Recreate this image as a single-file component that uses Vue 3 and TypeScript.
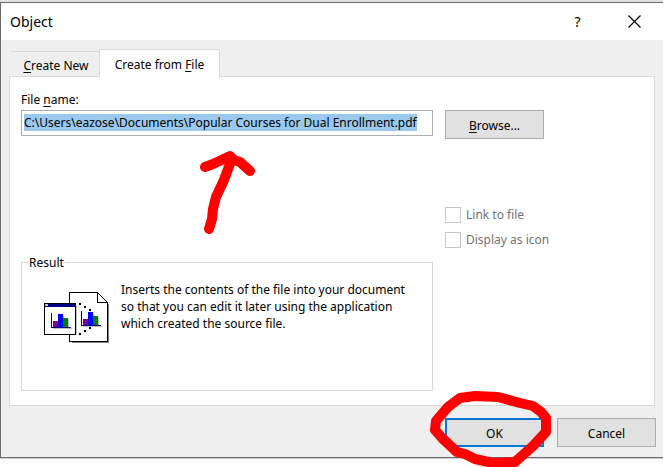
<script setup lang="ts">
import { onMounted, ref } from 'vue'

const fileName = ref('C:\\Users\\eazose\\Documents\\Popular Courses for Dual Enrollment.pdf')
const fileInput = ref<HTMLInputElement | null>(null)

onMounted(() => {
  fileInput.value?.focus()
  fileInput.value?.select()
})
</script>

<template>
  <main class="dialog">
    <header class="titlebar">
      <h1>Object</h1>
      <button class="caption help" type="button" aria-label="Help">?</button>
      <button class="caption" type="button" aria-label="Close">
        <svg width="13" height="13" viewBox="0 0 13 13"><path d="M.5 .5l12 12M12.5 .5l-12 12" stroke="#000" stroke-width="1.2" /></svg>
      </button>
    </header>

    <div class="body">
      <div class="tabs" role="tablist">
        <button class="tab" type="button" role="tab"><span><u>C</u>reate New</span></button>
        <button class="tab active" type="button" role="tab" aria-selected="true"><span>Create from <u>F</u>ile</span></button>
      </div>

      <section class="panel">
        <label class="name-label" for="file-name">File <u>n</u>ame:</label>
        <div class="field">
          <input id="file-name" ref="fileInput" v-model="fileName" type="text" spellcheck="false" />
          <svg class="arrow" width="60" height="90" viewBox="200 148 60 90" aria-hidden="true">
            <path d="M209 229L212 219L213 209L216 197L224 180L231 161M205 167L213 164L230 156L234 160L240 162L250 171" />
          </svg>
        </div>
        <button class="button browse" type="button"><span><u>B</u>rowse...</span></button>

        <div class="options">
          <label><input type="checkbox" disabled />Link to file</label>
          <label><input type="checkbox" disabled />Display as icon</label>
        </div>

        <fieldset class="result">
          <legend>Result</legend>
          <svg class="preview" width="66" height="52" viewBox="0 0 66 52" shape-rendering="crispEdges" aria-hidden="true">
            <path d="M28 51h37V12h-1v38H28z" fill="#808080" />
            <path d="M25.500 .500h28l10 10v39h-38z" fill="#fff" stroke="#000" />
            <path d="M53.500 .500v10h10" fill="none" stroke="#000" />
            <path d="M55 2l8 8" stroke="#000" shape-rendering="auto" />
            <path d="M2 43h31V14h-1v29z" fill="#c0c0c0" />
            <path d="M.500 11.500h31v31H.500z" fill="#fff" stroke="#000" />
            <path d="M1 12h30v3H1z" fill="#000080" />
            <path d="M1 12h3v2H1z" fill="#c0c0c0" />
            <g id="bars">
              <path d="M9 37h19v-1H9zM19 24h1v12h-1zM24 27h1v9h-1z" fill="#c0c0c0" />
              <path d="M9 29h5v6H9z" fill="#800080" />
              <path d="M14 22h5v13h-5z" fill="#00f" />
              <path d="M19 26h5v9h-5z" fill="#008000" />
              <path d="M7 21h1v14h19v1H7z" fill="#000080" />
            </g>
            <use href="#bars" x="30" y="-2" />
            <path d="M35 11h2v2h-2zM40 14h2v2h-2zM45 17h2v2h-2zM45 35h2v2h-2zM40 38h2v2h-2zM35 41h2v2h-2z" fill="#000" />
          </svg>
          <p>Inserts the contents of the file into your document so that you can edit it later using the application which created the source file.</p>
        </fieldset>
      </section>

      <footer class="actions">
        <div class="ok">
          <button class="button primary" type="button">OK</button>
          <svg class="ring" width="124" height="84" viewBox="428 386 124 84" aria-hidden="true">
            <path d="M498 397L475 396L460 398L448 407L436 421L435 430L442 438L457 452L465 454L475 459L493 463L515 462L533 446L546 432L546 418L541 412L533 406L520 403L498 397" />
          </svg>
        </div>
        <button class="button" type="button">Cancel</button>
      </footer>
    </div>
  </main>
</template>

<style>
body {
  min-height: 100vh;
  margin: 0;
  background: #fff;
  overflow: hidden;
}
</style>

<style scoped>
* {
  box-sizing: border-box;
}
.dialog {
  font: 12px/17px "Noto Sans", sans-serif;
  color: #000;
  border-top: 2px solid #e1e1e1;
}
button,
input {
  font: inherit;
  color: inherit;
}
u {
  text-underline-offset: 2px;
  text-decoration-thickness: 1px;
}
.titlebar {
  display: flex;
  align-items: center;
  height: 38px;
  padding-left: 9px;
  background: #fff;
  border-top: 1px solid #6c6c6c;
  border-left: 1px solid #6c6c6c;
}
h1 {
  flex: 1;
  margin: 0;
  font-size: 14px;
  font-weight: 400;
}
.caption {
  width: 57px;
  height: 32px;
  padding: 0;
  border: 0;
  background: none;
}
.caption svg {
  display: block;
  margin: auto;
}
.help {
  font-size: 14px;
}
.body {
  padding: 9px 7px 10px 8px;
  background: #efefef;
  border-left: 1px solid #6c6c6c;
  border-bottom: 1px solid #6c6c6c;
  box-shadow: 0 1px 0 #d0d0d0;
}
.tabs {
  display: flex;
  align-items: flex-end;
  padding-left: 2px;
}
.tab {
  height: 25px;
  width: 88px;
  padding: 2px 0 0 2px;
  border: 0;
  border-top: 1px solid #d9d9d9;
  background: transparent;
}
.tab.active {
  position: relative;
  width: 121px;
  height: 28px;
  margin-bottom: -1px;
  padding: 2px 0 0;
  border: 1px solid #d9d9d9;
  border-bottom: 0;
  background: #fff;
}
.panel {
  display: grid;
  grid-template-columns: minmax(0, 1fr) 198px;
  column-gap: 12px;
  margin-right: 1px;
  padding: 14px 11px;
  background: #fff;
  border: 1px solid #d9d9d9;
}
.name-label {
  grid-column: 1 / -1;
  margin-bottom: 2px;
}
.field {
  position: relative;
}
.field input {
  display: block;
  width: 100%;
  height: 26px;
  padding: 2px 2px 4px;
  border: 1px solid #ababb0;
  outline: 0;
  background: #fff;
}
.field input::selection {
  background: #99c9ef;
  color: #000;
}
.arrow {
  position: absolute;
  left: 179px;
  top: 38px;
}
.arrow path,
.ring path {
  fill: none;
  stroke: #f00;
  stroke-width: 10;
  stroke-linecap: round;
  stroke-linejoin: round;
}
.button {
  width: 99px;
  height: 29px;
  padding: 2px 0 0;
  border: 1px solid #ababab;
  background: #e1e1e1;
}
.options {
  grid-column: 2;
  display: grid;
  gap: 8px;
  margin-top: 67px;
  color: #737373;
}
.options label {
  display: flex;
  align-items: center;
  gap: 5px;
}
.options input {
  appearance: none;
  width: 16px;
  height: 16px;
  margin: 0;
  border: 1px solid #c6c6c6;
  background: #fff;
}
.result {
  display: flex;
  align-items: flex-start;
  gap: 11px;
  min-width: 0;
  min-height: 137px;
  margin: 6px 0 0;
  padding: 10px 20px 0 22px;
  border: 1px solid #d9d9d9;
}
legend {
  margin-left: -16px;
  padding: 0 1px;
}
.preview {
  flex: none;
  margin-top: 11px;
}
.result p {
  margin: 0;
}
.actions {
  display: flex;
  justify-content: flex-end;
  gap: 13px;
  padding-top: 12px;
}
.ok {
  position: relative;
}
.primary {
  padding-top: 1px;
  border: 2px solid #0078d7;
}
.ring {
  position: absolute;
  left: -17px;
  top: -32px;
}
</style>
